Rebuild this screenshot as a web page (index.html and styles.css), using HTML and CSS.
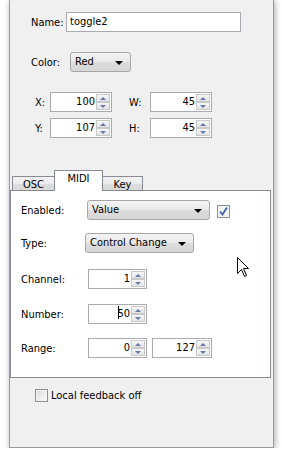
FILE: index.html
```html
<!DOCTYPE html>
<html lang="en">
<head>
    <meta charset="UTF-8">
    <meta name="viewport" content="width=device-width, initial-scale=1.0">
    <title>Control Properties</title>
    <link rel="stylesheet" href="styles.css">
</head>
<body>
    <div class="panel">
        <div class="name-row">
            <span class="lbl name-lbl">Name:</span>
            <div class="textbox">toggle2</div>
        </div>
        <div class="color-row">
            <span class="lbl color-lbl">Color:</span>
            <div class="combo color-combo"><span class="combo-text">Red</span><i class="arrow"></i></div>
        </div>
        <div class="geom">
            <span class="lbl">X:</span>
            <div class="spin geom-spin"><span class="val">100</span><span class="btns"><b class="up"></b><b class="dn"></b></span></div>
            <span class="lbl geom-lbl2">W:</span>
            <div class="spin geom-spin"><span class="val">45</span><span class="btns"><b class="up"></b><b class="dn"></b></span></div>
            <span class="lbl">Y:</span>
            <div class="spin geom-spin"><span class="val">107</span><span class="btns"><b class="up"></b><b class="dn"></b></span></div>
            <span class="lbl geom-lbl2">H:</span>
            <div class="spin geom-spin"><span class="val">45</span><span class="btns"><b class="up"></b><b class="dn"></b></span></div>
        </div>

        <div class="tabs">
            <div class="tab tab-osc">OSC</div>
            <div class="tab tab-midi active">MIDI</div>
            <div class="tab tab-key">Key</div>
        </div>
        <div class="pane">
            <div class="prow enabled-row">
                <span class="lbl plbl-enabled">Enabled:</span>
                <div class="combo enabled-combo"><span class="combo-text">Value</span><i class="arrow"></i></div>
                <span class="checkbox checked">
                    <svg width="11" height="11" viewBox="0 0 11 11"><path d="M2 5.5 L4.5 8.5 L9 1.5" fill="none" stroke="#3d5ea8" stroke-width="1.8"/></svg>
                </span>
            </div>
            <div class="prow type-row">
                <span class="lbl plbl-type">Type:</span>
                <div class="combo type-combo"><span class="combo-text">Control Change</span><i class="arrow"></i></div>
            </div>
            <div class="prow channel-row">
                <span class="lbl plbl">Channel:</span>
                <div class="spin pspin"><span class="val">1</span><span class="btns"><b class="up"></b><b class="dn"></b></span></div>
            </div>
            <div class="prow number-row">
                <span class="lbl plbl">Number:</span>
                <div class="spin pspin"><span class="val"><i class="caret"></i>50</span><span class="btns"><b class="up"></b><b class="dn"></b></span></div>
            </div>
            <div class="prow range-row">
                <span class="lbl plbl">Range:</span>
                <div class="spin pspin"><span class="val">0</span><span class="btns"><b class="up"></b><b class="dn"></b></span></div>
                <div class="spin pspin range-max"><span class="val">127</span><span class="btns"><b class="up"></b><b class="dn"></b></span></div>
            </div>
            <svg class="pointer" width="13" height="21" viewBox="0 0 13 21">
                <path d="M0.5 0.5 L0.5 16.5 L4.5 12.5 L7.5 19.5 L9.5 18.5 L6.5 11.5 L11.5 11.5 Z" fill="#fff" stroke="#000" stroke-width="1"/>
            </svg>
        </div>

        <div class="feedback-row">
            <span class="checkbox"></span>
            <span class="feedback-lbl">Local feedback off</span>
        </div>
    </div>
</body>
</html>
```

FILE: styles.css
```css
body {
    margin: 0;
    padding: 0;
    background-color: #fff;
    font-family: "DejaVu Sans Condensed", "Liberation Sans", sans-serif;
    font-size: 11px;
    color: #000;
}
.panel {
    position: relative;
    margin-left: 9px;
    width: 263px;
    height: 447px;
    background-color: #f0f0f0;
    border: 1px solid #9b9b9b;
    border-top: none;
    box-shadow: 1px 1px 6px rgba(0, 0, 0, 0.35);
}
.lbl {
    display: inline-block;
    white-space: nowrap;
}

/* top fields */
.name-row {
    display: flex;
    align-items: center;
    padding: 12px 0 0 21px;
}
.name-lbl {
    width: 35px;
}
.textbox {
    width: 175px;
    height: 20px;
    box-sizing: border-box;
    border: 1px solid #a9abb0;
    background-color: #fff;
    padding-left: 3px;
    line-height: 18px;
}
.color-row {
    display: flex;
    align-items: center;
    margin-top: 20px;
    padding-left: 21px;
}
.color-lbl {
    width: 39px;
}
.combo {
    position: relative;
    height: 20px;
    box-sizing: border-box;
    border: 1px solid #a7a7a7;
    border-radius: 3px;
    background: linear-gradient(#f4f4f4, #e9e9e9 50%, #dcdcdc 51%, #d7d7d7);
    line-height: 18px;
    padding-left: 4px;
}
.combo .arrow {
    position: absolute;
    right: 7px;
    top: 8px;
    border-top: 4px solid #000;
    border-left: 4px solid transparent;
    border-right: 4px solid transparent;
}
.color-combo {
    width: 61px;
}
.geom {
    display: grid;
    grid-template-columns: 15px 62px 38px 62px;
    grid-auto-rows: 20px;
    row-gap: 6px;
    align-items: center;
    margin-top: 20px;
    padding-left: 25px;
}
.geom-lbl2 {
    padding-left: 17px;
}

/* spin boxes */
.spin {
    display: flex;
    height: 20px;
    box-sizing: border-box;
    border: 1px solid #a9abb0;
    background-color: #fff;
}
.spin .val {
    position: relative;
    flex: 1;
    text-align: right;
    line-height: 18px;
    padding-right: 1px;
}
.spin .btns {
    display: flex;
    flex-direction: column;
    width: 15px;
    padding: 1px 1px 1px 0;
    box-sizing: border-box;
}
.spin .btns b {
    position: relative;
    flex: 1;
    border: 1px solid #c9c9c9;
    background: linear-gradient(#f7f7f7, #e3e3e3);
}
.spin .btns b::after {
    content: "";
    position: absolute;
    left: 3px;
    top: 2px;
    border-left: 3px solid transparent;
    border-right: 3px solid transparent;
}
.spin .up::after {
    border-bottom: 3px solid #6479ad;
}
.spin .dn::after {
    border-top: 3px solid #6479ad;
}
.caret {
    display: inline-block;
    width: 1px;
    height: 13px;
    background-color: #000;
    vertical-align: -2px;
    margin-right: -2px;
}

/* tabs */
.tabs {
    position: relative;
    z-index: 1;
    display: flex;
    align-items: flex-end;
    height: 20px;
    margin-top: 32px;
    padding-left: 2px;
}
.tab {
    height: 14px;
    box-sizing: border-box;
    border: 1px solid #898c95;
    border-bottom: none;
    background: linear-gradient(#f3f3f3, #ebebeb 50%, #dddddd 51%, #d9d9d9);
    text-align: center;
    line-height: 15px;
}
.tab-osc {
    width: 43px;
}
.tab-midi {
    width: 49px;
    margin-left: -1px;
}
.tab-key {
    width: 41px;
    margin-left: -1px;
}
.tab.active {
    height: 21px;
    margin-bottom: -1px;
    background: #fff;
    line-height: 15px;
}
.pane {
    position: relative;
    width: 261px;
    height: 188px;
    box-sizing: border-box;
    border: 1px solid #898c95;
    background-color: #fff;
    padding: 9px 0 0 10px;
}
.prow {
    display: flex;
    align-items: center;
    height: 20px;
}
.plbl-enabled {
    width: 66px;
}
.enabled-combo {
    width: 123px;
}
.type-row {
    margin-top: 13px;
}
.plbl-type {
    width: 64px;
}
.type-combo {
    width: 109px;
}
.plbl {
    width: 67px;
}
.pspin {
    width: 59px;
}
.channel-row {
    margin-top: 16px;
}
.number-row {
    margin-top: 15px;
}
.range-row {
    margin-top: 14px;
}
.range-max {
    width: 60px;
    margin-left: 5px;
}
.checkbox {
    display: inline-block;
    width: 13px;
    height: 13px;
    box-sizing: border-box;
    border: 1px solid #8e8f8f;
    background: linear-gradient(135deg, #dcdcdc, #fafafa);
    box-shadow: inset 0 0 0 1px #f4f4f4;
}
.checkbox svg {
    display: block;
    margin: 0;
}
.checkbox.checked {
    margin-left: 7px;
    margin-top: 2px;
    background: #f4f4f4;
}
.pointer {
    position: absolute;
    left: 226px;
    top: 66px;
}

.feedback-row {
    display: flex;
    align-items: center;
    margin-top: 11px;
    padding-left: 25px;
}
.feedback-lbl {
    margin-left: 3px;
}
```
